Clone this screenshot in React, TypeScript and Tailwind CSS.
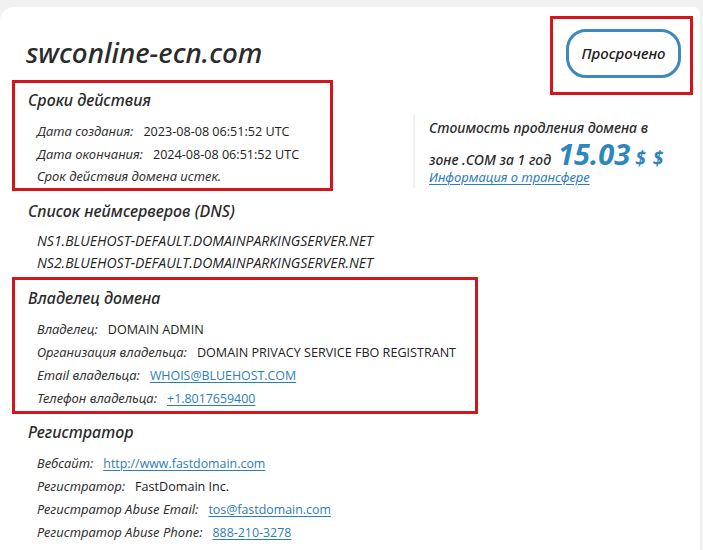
import type { ReactNode } from 'react';

const label = "font-['Noto_Sans',sans-serif] italic text-[13px] text-[#333]";
const value = "font-['Open_Sans',sans-serif] text-[12.6px] text-[#222]";
const link = "font-['Open_Sans',sans-serif] text-[12.4px] text-[#2d7db8] underline underline-offset-2";
const heading = "font-['Noto_Sans',sans-serif] italic font-medium text-[16px] leading-[22px] text-[#2b2b2b]";

function Row({ name, children }: { name: string; children: ReactNode }) {
  return (
    <div className="flex items-baseline h-[23px] leading-[23px] pl-[9px]">
      <span className={label}>{name}</span>
      <span className="ml-[10px]">{children}</span>
    </div>
  );
}

export default function App() {
  return (
    <div className="min-h-[550px] bg-[#f1f1f1] pt-[7px]">
      <div className="min-h-[543px] bg-white rounded-tl-[14px] rounded-tr-[6px] mr-[3px]">
        {/* верх: заголовок + статус */}
        <div className="flex">
          <div className="w-[413px] shrink-0 pl-[12px] pt-[29px]">
            <h1 className="pl-[14px] font-['Noto_Sans',sans-serif] italic font-medium text-[27.8px] leading-[32px] text-[#2b2b2b]">
              swconline-ecn.com
            </h1>
            <div className="mt-[12px] w-[321px] border-[3px] border-[#d4161c] pl-[13px] pt-[6px] pb-[1px]">
              <h2 className={heading}>Сроки действия</h2>
              <div className="mt-[8px]">
                <Row name="Дата создания:">
                  <span className={value}>2023-08-08 06:51:52 UTC</span>
                </Row>
                <Row name="Дата окончания:">
                  <span className={value}>2024-08-08 06:51:52 UTC</span>
                </Row>
                <div className={`h-[22px] leading-[22px] pl-[9px] ${label}`}>Срок действия домена истек.</div>
              </div>
            </div>
          </div>

          <div className="flex-1 flex flex-col">
            <div className="self-end mt-[9px] mr-[7px] w-[143px] h-[79px] border-[3px] border-[#d4161c] pl-[13px] pt-[10px]">
              <div className="w-[115px] h-[49px] rounded-[20px] border-[3px] border-[#3d89bf] flex items-center justify-center font-['Noto_Sans',sans-serif] italic font-medium text-[15px] text-[#222]">
                Просрочено
              </div>
            </div>
            <div className="mt-[20px] border-l-2 border-[#f0f0f0] pl-[14px] h-[73px] w-[260px]">
              <div className="font-['Noto_Sans',sans-serif] italic font-medium text-[14px] leading-[22px] text-[#2b2b2b] mt-[2px]">
                Стоимость продления домена в
              </div>
              <div className="flex items-baseline h-[30px]">
                <span className="font-['Noto_Sans',sans-serif] italic font-medium text-[14px] text-[#2b2b2b]">зоне .COM за 1 год</span>
                <span className="ml-[7px] font-['Noto_Sans',sans-serif] italic font-bold text-[29px] leading-[30px] text-[#2e86c1]">15.03</span>
                <span className="ml-[5px] font-['Noto_Sans',sans-serif] italic font-bold text-[19px] tracking-[1px] text-[#2e86c1]">$ $</span>
              </div>
              <a className="block -mt-[2px] font-['Noto_Sans',sans-serif] italic text-[13px] leading-[20px] text-[#2d7db8] underline underline-offset-2">
                Информация о трансфере
              </a>
            </div>
          </div>
        </div>

        {/* DNS */}
        <div className="pl-[28px] mt-[9px]">
          <h2 className={heading}>Список неймсерверов (DNS)</h2>
          <div className="mt-[8px] pl-[9px] font-['Open_Sans',sans-serif] italic text-[14px] leading-[22px] text-[#222]">
            <div>NS1.BLUEHOST-DEFAULT.DOMAINPARKINGSERVER.NET</div>
            <div>NS2.BLUEHOST-DEFAULT.DOMAINPARKINGSERVER.NET</div>
          </div>
        </div>

        {/* Владелец */}
        <div className="ml-[12px] mt-[3px] w-[466px] border-[3px] border-[#d4161c] pl-[13px] pt-[7px] pb-[2px]">
          <h2 className={heading}>Владелец домена</h2>
          <div className="mt-[8px]">
            <Row name="Владелец:">
              <span className={value}>DOMAIN ADMIN</span>
            </Row>
            <Row name="Организация владельца:">
              <span className={value}>DOMAIN PRIVACY SERVICE FBO REGISTRANT</span>
            </Row>
            <Row name="Email владельца:">
              <a className={link}>WHOIS@BLUEHOST.COM</a>
            </Row>
            <Row name="Телефон владельца:">
              <a className={link}>+1.8017659400</a>
            </Row>
          </div>
        </div>

        {/* Регистратор */}
        <div className="pl-[28px] mt-[7px]">
          <h2 className={heading}>Регистратор</h2>
          <div className="mt-[8px]">
            <Row name="Вебсайт:">
              <a className={link}>http://www.fastdomain.com</a>
            </Row>
            <Row name="Регистратор:">
              <span className={value}>FastDomain Inc.</span>
            </Row>
            <Row name="Регистратор Abuse Email:">
              <a className={link}>tos@fastdomain.com</a>
            </Row>
            <Row name="Регистратор Abuse Phone:">
              <a className={link}>888-210-3278</a>
            </Row>
          </div>
        </div>
      </div>
    </div>
  );
}
